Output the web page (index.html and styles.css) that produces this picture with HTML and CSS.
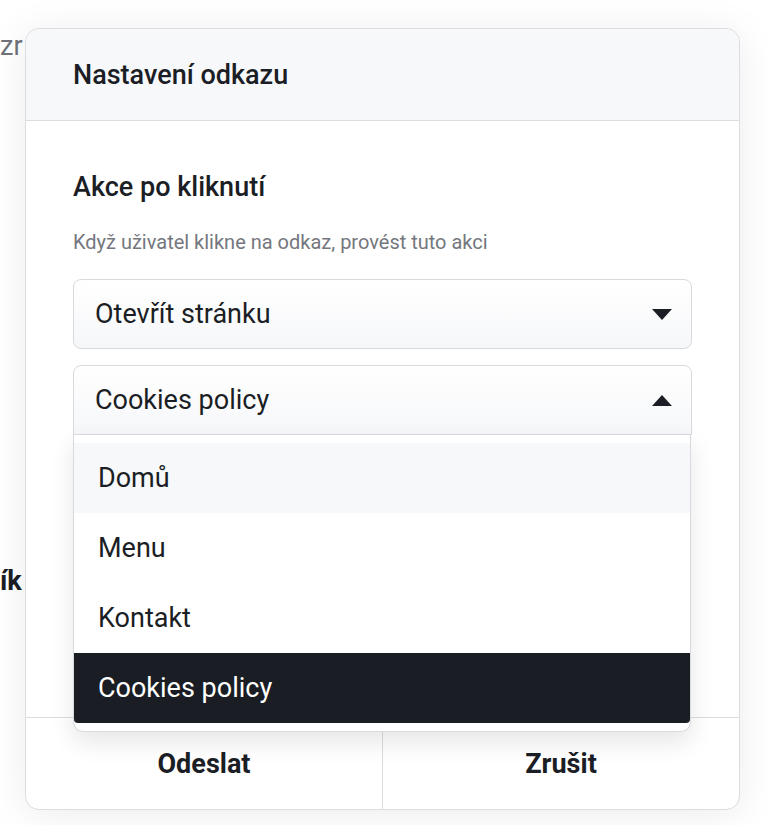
FILE: index.html
```html
<!DOCTYPE html>
<html lang="cs">
<head>
<meta charset="utf-8">
<link rel="stylesheet" href="styles.css">
</head>
<body>
<div class="page">
  <div class="bg-line bg-top">zr</div>
  <div class="bg-line bg-bold">ík</div>
</div>
<div class="modal">
  <div class="modal-header">Nastavení odkazu</div>
  <div class="modal-body">
    <div class="field-label">Akce po kliknutí</div>
    <div class="field-desc">Když uživatel klikne na odkaz, provést tuto akci</div>
    <div class="select">
      <span>Otevřít stránku</span>
      <span class="caret caret-down"></span>
    </div>
    <div class="select-wrap">
      <div class="select open">
        <span>Cookies policy</span>
        <span class="caret caret-up"></span>
      </div>
      <ul class="dropdown">
        <li class="opt hover">Domů</li>
        <li class="opt">Menu</li>
        <li class="opt">Kontakt</li>
        <li class="opt selected">Cookies policy</li>
      </ul>
    </div>
  </div>
  <div class="modal-footer">
    <div class="btn">Odeslat</div>
    <div class="btn">Zrušit</div>
  </div>
</div>
</body>
</html>
```
FILE: styles.css
```css
* { box-sizing: border-box; }
html, body { margin: 0; padding: 0; }
body {
  width: 768px;
  height: 825px;
  overflow: hidden;
  background: #ffffff;
  font-family: Roboto, "Noto Sans", Arial, sans-serif;
  color: #1b1e24;
  position: relative;
}
.page {
  padding-top: 30px;
  padding-left: 0;
}
.bg-line {
  white-space: nowrap;
  line-height: 32px;
  font-size: 27px;
}
.bg-top {
  color: #6f7278;
}
.bg-bold {
  margin-top: 503px;
  font-weight: 700;
  color: #1b1e24;
}
.modal {
  position: absolute;
  left: 25px;
  top: 28px;
  width: 715px;
  height: 782px;
  background: #ffffff;
  border: 1px solid #dcdde1;
  border-radius: 14px;
  box-shadow: 0 4px 40px rgba(0, 0, 0, 0.08);
  display: flex;
  flex-direction: column;
}
.modal-header {
  height: 92px;
  flex: none;
  background: #f7f8fa;
  border-bottom: 1px solid #dcdde1;
  border-radius: 14px 14px 0 0;
  padding-left: 47px;
  display: flex;
  align-items: center;
  font-size: 27px;
  font-weight: 500;
}
.modal-body {
  flex: 1;
  padding: 49px 47px 0;
  display: flex;
  flex-direction: column;
}
.field-label {
  font-size: 27px;
  font-weight: 500;
  line-height: 34px;
}
.field-desc {
  margin-top: 26px;
  font-size: 20px;
  color: #74777d;
  line-height: 24px;
}
.select {
  margin-top: 25px;
  height: 70px;
  border: 1px solid #d9dadf;
  border-radius: 8px;
  background: linear-gradient(#ffffff, #f6f7f9);
  display: flex;
  align-items: center;
  justify-content: space-between;
  padding: 0 19px 0 21px;
  font-size: 27px;
}
.select-wrap {
  position: relative;
  margin-top: 16px;
}
.select-wrap .select { margin-top: 0; }
.select.open {
  border-radius: 8px 8px 0 0;
}
.caret {
  width: 0;
  height: 0;
  border-left: 10px solid transparent;
  border-right: 10px solid transparent;
}
.caret-down { border-top: 11px solid #1b1e24; }
.caret-up { border-bottom: 11px solid #1b1e24; }
.dropdown {
  position: absolute;
  left: 0;
  top: 70px;
  width: 618px;
  margin: 0;
  padding: 8px 0;
  list-style: none;
  background: #ffffff;
  border: 1px solid #d9dadf;
  border-top: none;
  border-radius: 0 0 10px 10px;
  box-shadow: 0 10px 24px rgba(0, 0, 0, 0.10);
  z-index: 2;
}
.opt {
  height: 70px;
  display: flex;
  align-items: center;
  padding-left: 24px;
  font-size: 27px;
}
.opt.hover { background: #f7f8fa; }
.opt.selected {
  background: #1a1d23;
  color: #ffffff;
  border-radius: 0 0 4px 4px;
}
.modal-footer {
  height: 92px;
  flex: none;
  border-top: 1px solid #dcdde1;
  display: flex;
}
.btn {
  flex: 1;
  display: flex;
  align-items: center;
  justify-content: center;
  font-size: 27px;
  font-weight: 700;
}
.btn + .btn { border-left: 1px solid #dcdde1; }
```
